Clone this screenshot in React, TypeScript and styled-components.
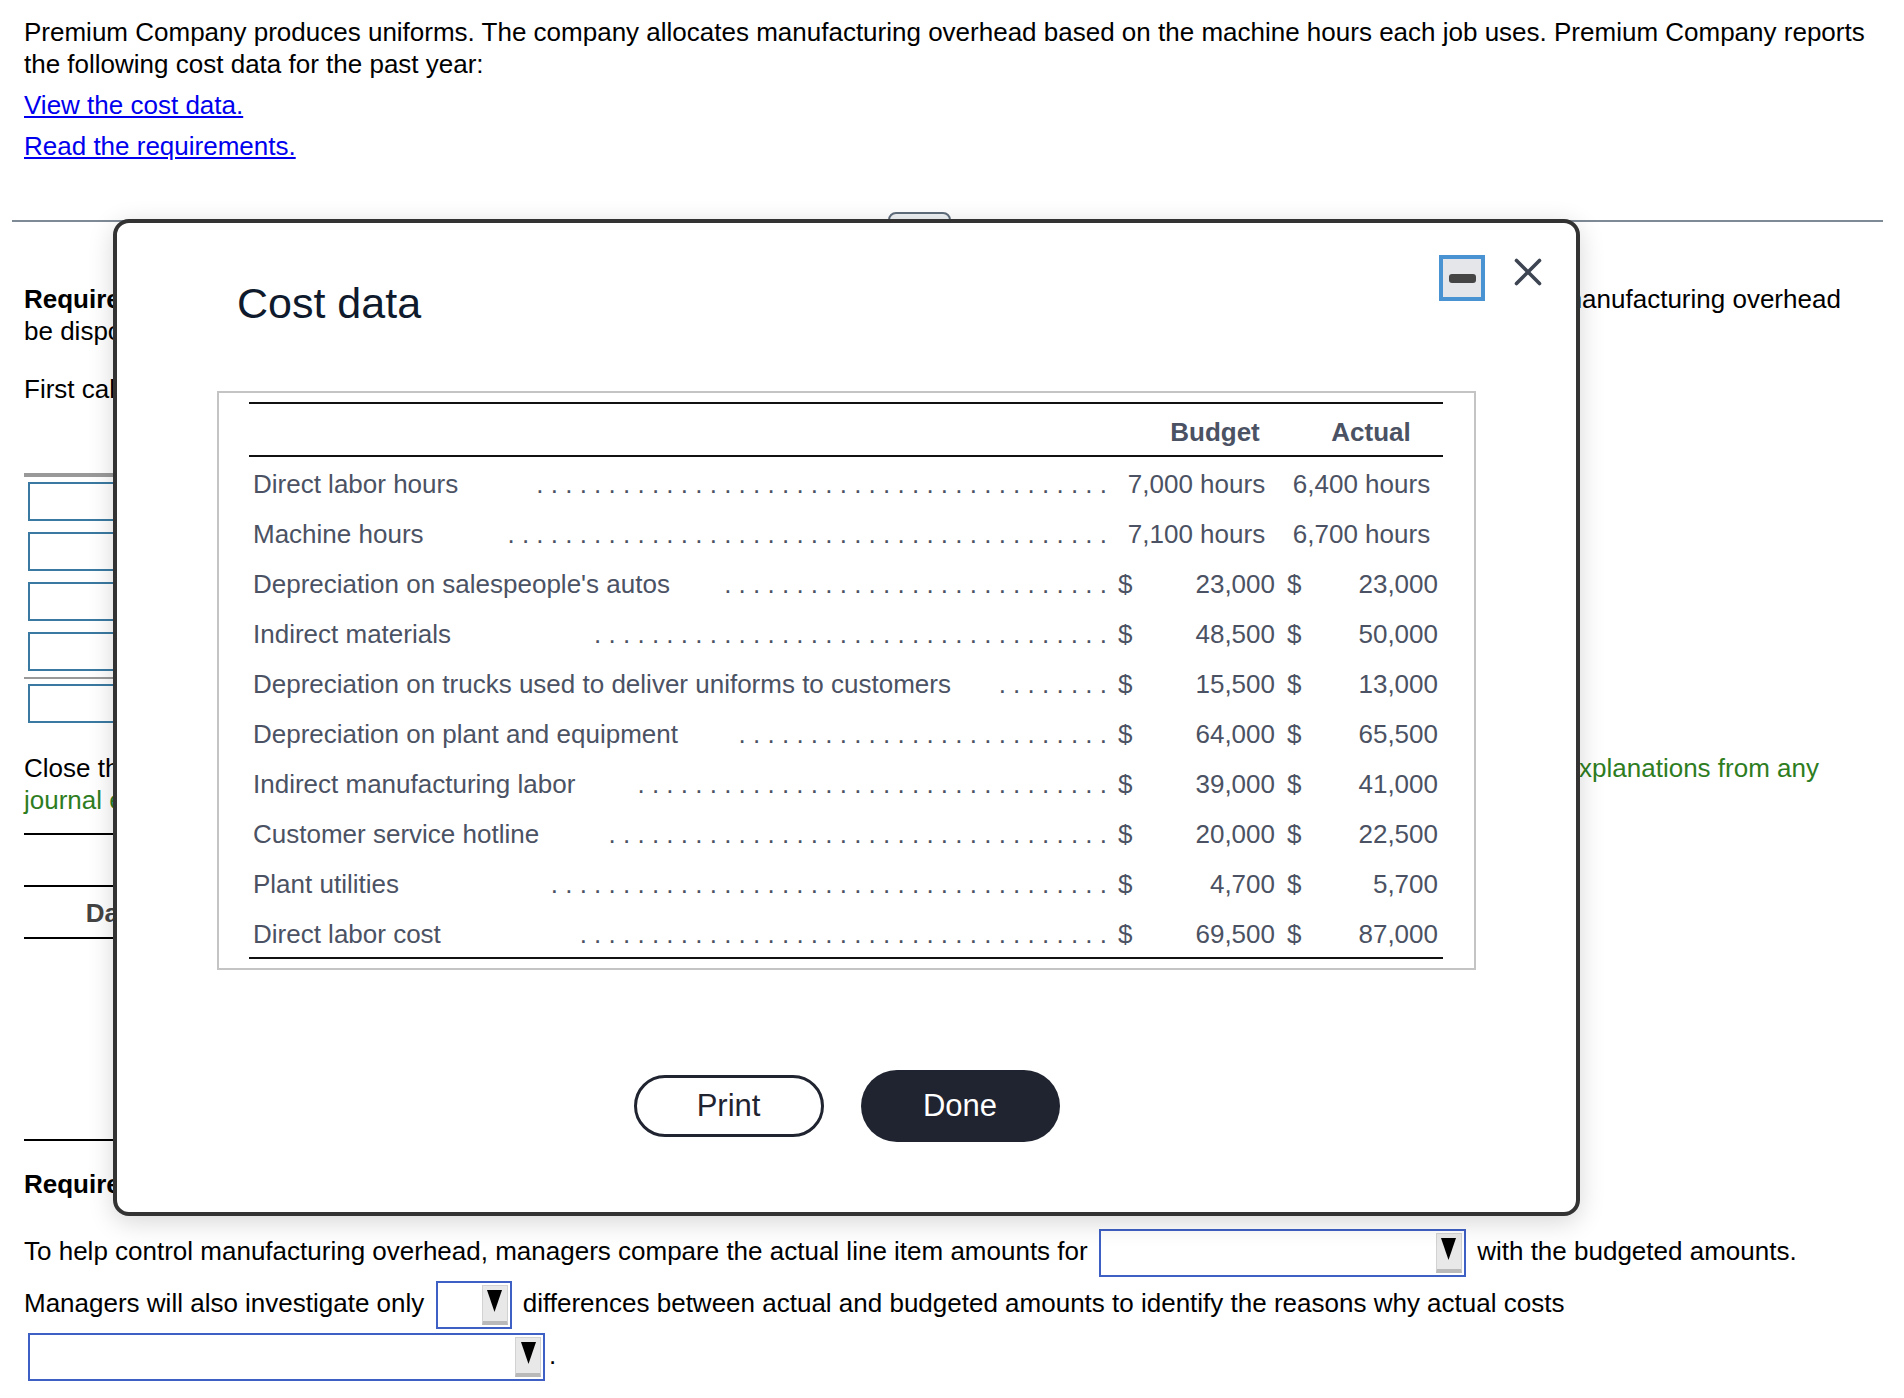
import React from "react";
import styled, { createGlobalStyle } from "styled-components";

const GlobalStyle = createGlobalStyle`
  html, body {
    margin: 0;
    padding: 0;
    background: #fff;
  }
  body {
    font-family: "Liberation Sans", Arial, Helvetica, sans-serif;
    color: #000;
  }
`;

const rows = [
  { label: "Direct labor hours", dots: 40, budget: "7,000 hours", actual: "6,400 hours", hours: true },
  { label: "Machine hours", dots: 42, budget: "7,100 hours", actual: "6,700 hours", hours: true },
  { label: "Depreciation on salespeople's autos", dots: 27, budget: "23,000", actual: "23,000" },
  { label: "Indirect materials", dots: 36, budget: "48,500", actual: "50,000" },
  { label: "Depreciation on trucks used to deliver uniforms to customers", dots: 8, budget: "15,500", actual: "13,000" },
  { label: "Depreciation on plant and equipment", dots: 26, budget: "64,000", actual: "65,500" },
  { label: "Indirect manufacturing labor", dots: 33, budget: "39,000", actual: "41,000" },
  { label: "Customer service hotline", dots: 35, budget: "20,000", actual: "22,500" },
  { label: "Plant utilities", dots: 39, budget: "4,700", actual: "5,700" },
  { label: "Direct labor cost", dots: 37, budget: "69,500", actual: "87,000" },
];

const leader = (n: number) => Array.from({ length: n }, () => ".").join(" ");

const DownArrow = () => (
  <svg width="15" height="22" viewBox="0 0 15 22">
    <polygon points="0,0 15,0 7.5,22" fill="#000" />
  </svg>
);

const App = () => {
  return (
    <Page>
      <GlobalStyle />
      <Intro>
        <Para>
          Premium Company produces uniforms. The company allocates manufacturing overhead based on the
          machine hours each job uses. Premium Company reports the following cost data for the past year:
        </Para>
        <LinkLine>
          <TextLink>View the cost data.</TextLink>
        </LinkLine>
        <LinkLine>
          <TextLink>Read the requirements.</TextLink>
        </LinkLine>
      </Intro>

      <Divider>
        <Handle>
          <HandleDot />
          <HandleDot />
          <HandleDot />
        </Handle>
      </Divider>

      <Work>
        <ReqPara>
          <b>Requirement 1.</b> Compute the overhead allocated for the past year. The Company's policy is that
          any underallocated or overallocated manufacturing overhead
          <br />
          be disposed of by closing it to Cost of Goods Sold.
        </ReqPara>
        <FirstPara>
          First calculate the amount of overhead allocated and the underallocated or overallocated overhead.
        </FirstPara>

        <CalcTable>
          <CalcRow>
            <InputBox />
          </CalcRow>
          <CalcRow>
            <InputBox />
          </CalcRow>
          <CalcRow>
            <InputBox />
          </CalcRow>
          <CalcRow $rule>
            <InputBox />
          </CalcRow>
          <CalcRow>
            <InputBox />
          </CalcRow>
        </CalcTable>

        <ClosePara>
          Close the balances of the Manufacturing Overhead account to Cost of Goods Sold account.{" "}
          <Hint>
            (Record debits first, then credits. Exclude explanations from any
            <br />
            journal entries.)
          </Hint>
        </ClosePara>

        <Journal>
          <JournalTitle />
          <JournalHead>
            <HeadCell>Date</HeadCell>
            <HeadCell>Accounts and Explanation</HeadCell>
            <HeadCell>Debit</HeadCell>
            <HeadCell>Credit</HeadCell>
          </JournalHead>
          <JournalBody />
        </Journal>

        <Req2Para>
          <b>Requirement 2.</b> Explain how managers can use the cost data to control overhead.
        </Req2Para>

        <Question>
          To help control manufacturing overhead, managers compare the actual line item amounts for{" "}
          <Select $w={367}>
            <ArrowBox>
              <DownArrow />
            </ArrowBox>
          </Select>{" "}
          with the budgeted amounts.
          <br />
          Managers will also investigate only{" "}
          <Select $w={76}>
            <ArrowBox>
              <DownArrow />
            </ArrowBox>
          </Select>{" "}
          differences between actual and budgeted amounts to identify the reasons why actual costs
          <br />
          <Select $w={517}>
            <ArrowBox>
              <DownArrow />
            </ArrowBox>
          </Select>
          .
        </Question>
      </Work>

      <Modal>
        <ModalHeader>
          <Title>Cost data</Title>
          <Controls>
            <MinButton>
              <MinBar />
            </MinButton>
            <svg width="28" height="28" viewBox="0 0 28 28" style={{ marginTop: 3 }}>
              <path d="M2.5 2.5 L25.5 25.5 M25.5 2.5 L2.5 25.5" stroke="#3d4552" strokeWidth="3.6" strokeLinecap="round" />
            </svg>
          </Controls>
        </ModalHeader>

        <TableBox>
          <CostTable>
            <Row $head>
              <Cell />
              <Cell />
              <HeadLabel $pl={10}>Budget</HeadLabel>
              <Cell />
              <HeadLabel $pr={8}>Actual</HeadLabel>
            </Row>
            {rows.map((r) => (
              <Row key={r.label}>
                <LabelCell>
                  <span>{r.label}</span>
                  <Dots>{leader(r.dots)}</Dots>
                </LabelCell>
                {r.hours ? (
                  <>
                    <HoursCell>{r.budget}</HoursCell>
                    <HoursCell>{r.actual}</HoursCell>
                  </>
                ) : (
                  <>
                    <DollarCell $pl={5}>$</DollarCell>
                    <NumCell>{r.budget}</NumCell>
                    <DollarCell $pl={7}>$</DollarCell>
                    <NumCell>{r.actual}</NumCell>
                  </>
                )}
              </Row>
            ))}
          </CostTable>
        </TableBox>

        <ButtonRow>
          <PrintButton>Print</PrintButton>
          <DoneButton>Done</DoneButton>
        </ButtonRow>
      </Modal>
    </Page>
  );
};

export default App;

const Page = styled.div`
  position: relative;
  width: 1904px;
  height: 1398px;
  padding: 16px 12px 0;
  box-sizing: border-box;
  font-size: 26px;
  line-height: 32px;
  overflow: hidden;
`;

const Intro = styled.div`
  padding: 0 12px;
`;

const Para = styled.p`
  margin: 0;
`;

const LinkLine = styled.p`
  margin: 9px 0 0;
`;

const TextLink = styled.a`
  color: #0000ee;
  text-decoration: underline;
  cursor: pointer;
`;

const Divider = styled.div`
  position: relative;
  width: 1871px;
  height: 2px;
  margin-top: 58px;
  background: #7f8a97;
`;

const Handle = styled.div`
  position: absolute;
  left: 876px;
  top: -8px;
  width: 63px;
  height: 18px;
  box-sizing: border-box;
  border: 2px solid #5f6d7c;
  border-radius: 8px;
  background: #eef1f4;
  display: flex;
  justify-content: center;
  gap: 5px;
  padding-top: 5px;
`;

const HandleDot = styled.span`
  width: 4px;
  height: 4px;
  border-radius: 50%;
  background: #5f6d7c;
`;

const Work = styled.div`
  padding: 0 12px;
`;

const ReqPara = styled.p`
  margin: 61px 0 0;
`;

const FirstPara = styled.p`
  margin: 26px 0 0;
`;

const CalcTable = styled.div`
  margin-top: 68px;
  width: 700px;
  border-top: 4px solid #999;
`;

const CalcRow = styled.div<{ $rule?: boolean }>`
  padding: 5px 0 6px 4px;
  border-bottom: ${(p) => (p.$rule ? "2px solid #999" : "none")};
`;

const InputBox = styled.div`
  width: 300px;
  height: 39px;
  box-sizing: border-box;
  border: 2px solid #3a79a1;
  background: #fff;
`;

const ClosePara = styled.p`
  margin: 23px 0 0;
`;

const Hint = styled.span`
  color: #2e7d1f;
`;

const Journal = styled.div`
  margin-top: 17px;
  width: 1100px;
  border-top: 2px solid #000;
  border-bottom: 2px solid #000;
`;

const JournalTitle = styled.div`
  height: 50px;
  border-bottom: 2px solid #000;
`;

const JournalHead = styled.div`
  display: grid;
  grid-template-columns: 180px 1fr 200px 200px;
  height: 50px;
  line-height: 52px;
  border-bottom: 2px solid #000;
`;

const HeadCell = styled.div`
  text-align: center;
  font-weight: bold;
  color: #444;
`;

const JournalBody = styled.div`
  height: 200px;
`;

const Req2Para = styled.p`
  margin: 27px 0 0;
`;

const Question = styled.p`
  margin: 25px 0 0;
  line-height: 52px;
`;

const Select = styled.span<{ $w: number }>`
  display: inline-flex;
  justify-content: flex-end;
  align-items: stretch;
  box-sizing: border-box;
  width: ${(p) => p.$w}px;
  height: 48px;
  margin: 0 4px;
  padding: 2px 2px 2px 0;
  border: 2px solid #3e60c4;
  background: #fff;
  vertical-align: middle;
`;

const ArrowBox = styled.span`
  display: flex;
  justify-content: center;
  align-items: flex-start;
  width: 26px;
  box-sizing: border-box;
  padding-top: 4px;
  background: #e8e8e8;
  border: 1px solid #d2d2d2;
  border-bottom: 4px solid #b9b9b9;
`;

const Modal = styled.div`
  position: absolute;
  left: 113px;
  top: 219px;
  width: 1467px;
  box-sizing: border-box;
  border: 4px solid #333;
  border-radius: 16px;
  background: #fff;
  box-shadow: 0 6px 26px rgba(0, 0, 0, 0.16);
`;

const ModalHeader = styled.div`
  display: flex;
  justify-content: space-between;
  align-items: flex-start;
  padding: 32px 34px 0 120px;
`;

const Title = styled.h2`
  margin: 23px 0 0;
  font-size: 43px;
  line-height: 50px;
  font-weight: normal;
  color: #0f1b2d;
`;

const Controls = styled.div`
  display: flex;
  align-items: flex-start;
  gap: 29px;
`;

const MinButton = styled.div`
  width: 46px;
  height: 46px;
  box-sizing: border-box;
  border: 4px solid #4a93d3;
  background: #e4e6ea;
  display: flex;
  align-items: center;
  justify-content: center;
`;

const MinBar = styled.div`
  width: 27px;
  height: 9px;
  border-radius: 3px;
  background: #454545;
`;

const TableBox = styled.div`
  margin: 63px 100px 0;
  border: 2px solid #c4c4c4;
  padding: 9px 31px 9px 30px;
`;

const CostTable = styled.div`
  border-top: 2px solid #111;
  border-bottom: 2px solid #111;
  color: #4b5263;
`;

const Row = styled.div<{ $head?: boolean }>`
  display: grid;
  grid-template-columns: 864px 27px 140px 27px 136px;
  padding: ${(p) => (p.$head ? "13px 0 8px" : "12px 0 8px")};
  line-height: 30px;
  border-bottom: ${(p) => (p.$head ? "2px solid #111" : "none")};
`;

const Cell = styled.div``;

const HeadLabel = styled.div<{ $pl?: number; $pr?: number }>`
  text-align: center;
  font-weight: bold;
  padding-left: ${(p) => p.$pl || 0}px;
  padding-right: ${(p) => p.$pr || 0}px;
`;

const LabelCell = styled.div`
  display: flex;
  justify-content: space-between;
  padding: 0 6px 0 4px;
  white-space: nowrap;
  overflow: hidden;
`;

const Dots = styled.span`
  white-space: nowrap;
`;

const DollarCell = styled.div<{ $pl: number }>`
  padding-left: ${(p) => p.$pl}px;
`;

const NumCell = styled.div`
  text-align: right;
  padding-right: 5px;
`;

const HoursCell = styled.div`
  grid-column: span 2;
  text-align: center;
  white-space: nowrap;
`;

const ButtonRow = styled.div`
  display: flex;
  justify-content: center;
  align-items: center;
  gap: 37px;
  margin-top: 100px;
  padding-bottom: 70px;
`;

const PrintButton = styled.button`
  width: 190px;
  height: 62px;
  box-sizing: border-box;
  border: 3px solid #1f2430;
  border-radius: 31px;
  background: #fff;
  color: #1f2430;
  font-family: inherit;
  font-size: 31px;
  padding: 0;
  cursor: pointer;
`;

const DoneButton = styled.button`
  width: 199px;
  height: 72px;
  border: none;
  border-radius: 36px;
  background: #1f2430;
  color: #fff;
  font-family: inherit;
  font-size: 31px;
  padding: 0;
  cursor: pointer;
`;
